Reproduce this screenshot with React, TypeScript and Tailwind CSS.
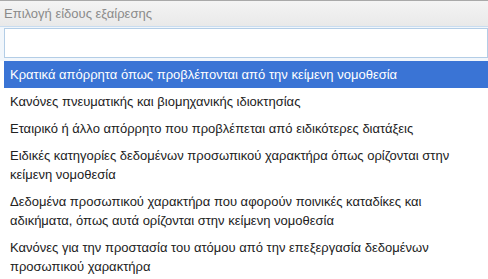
import React from 'react';

const ExceptionSelect: React.FC = () => {
  const options = [
    'Κρατικά απόρρητα όπως προβλέπονται από την κείμενη νομοθεσία',
    'Κανόνες πνευματικής και βιομηχανικής ιδιοκτησίας',
    'Εταιρικό ή άλλο απόρρητο που προβλέπεται από ειδικότερες διατάξεις',
    'Ειδικές κατηγορίες δεδομένων προσωπικού χαρακτήρα όπως ορίζονται στην κείμενη νομοθεσία',
    'Δεδομένα προσωπικού χαρακτήρα που αφορούν ποινικές καταδίκες και αδικήματα, όπως αυτά ορίζονται στην κείμενη νομοθεσία',
    'Κανόνες για την προστασία του ατόμου από την επεξεργασία δεδομένων προσωπικού χαρακτήρα',
  ];

  return (
    <div className="w-[488px] h-[279px] overflow-hidden bg-white font-['Liberation_Sans',Arial,sans-serif] text-[13px]">
      <div className="h-[27px] border-t border-t-[#a9a9a9] border-b border-b-[#c9dcef] bg-gradient-to-b from-[#f4f4f4] to-[#e9e9e9] pl-[4px] leading-[25px] text-[#8a8a8a]">
        Επιλογή είδους εξαίρεσης
      </div>
      <div className="bg-[#f1f6fb] pl-[4px] pt-[1px] pb-[3px]">
        <div className="h-[30px] border border-[#b3cde6] bg-white"></div>
      </div>
      <ul className="pl-[4px] pr-[22px] w-[488px]">
        {options.map((label, i) => (
          <li
            key={label}
            className={
              i === 0
                ? 'bg-[#3a74d5] text-white px-[6px] py-[4px] leading-[19px] -mr-[22px]'
                : 'text-[#222] px-[6px] py-[4px] leading-[19px]'
            }
          >
            {label}
          </li>
        ))}
      </ul>
    </div>
  );
};

export default ExceptionSelect;
